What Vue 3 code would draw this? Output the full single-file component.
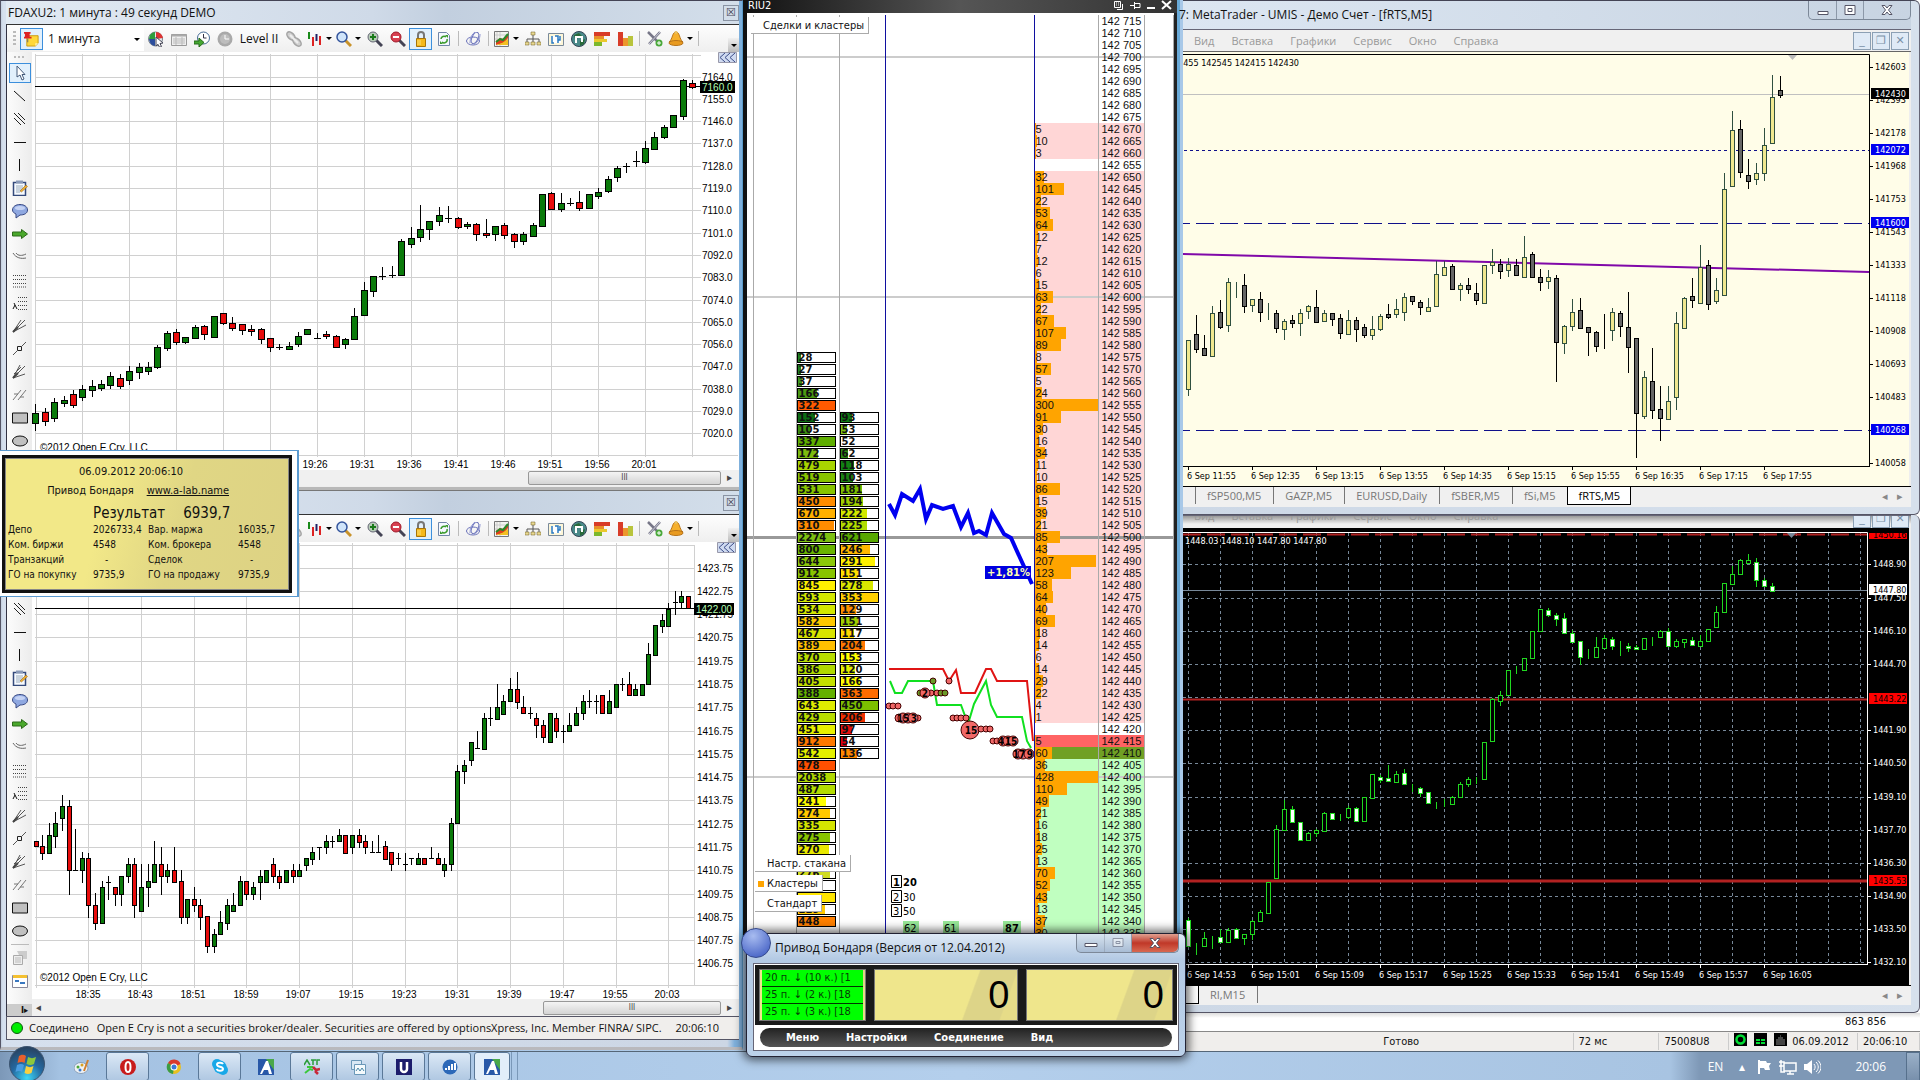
<script setup>
const icons = {
  note: '<path d="M3 5h12v8l-3 3H3z" fill="#ffd83a" stroke="#c99a10"/><path d="M15 13h-3v3z" fill="#fff3b0"/><path d="M0 1h7v2H6v3h2v2H0V6h1V3H0z" fill="#d22"/><path d="M4 8v4" stroke="#666"/>',
  globeCursor: '<circle cx="7.5" cy="8" r="7" fill="#e8eef0" stroke="#78828c"/><path d="M8 1a7 7 0 0 1 7 6L8 8z" fill="#d33"/><path d="M1 8a7 7 0 0 1 6-7v7z" fill="#2e9e3c"/><path d="M1 8h6v7a7 7 0 0 1-6-7z" fill="#2b4d9c"/><path d="M8 6l7 6-3 .5 1.5 3-2 .8-1.5-3L8 15z" fill="#fff" stroke="#445"/>',
  sheet: '<path d="M.5 3.5h15v11H.5z" fill="#eee" stroke="#999"/><path d="M.5 3.5h15v2H.5z" fill="#aaa"/><path d="M2 8h12M2 10h12M2 12h12M5 6v8M11 6v8" stroke="#bbb"/>',
  clockArrow: '<circle cx="9.5" cy="7" r="6" fill="#fff" stroke="#456a94"/><path d="M9.5 3v4h3" fill="none" stroke="#334"/><path d="M0 10h5V7l5 4.5L5 16v-3H0z" fill="#46a832" stroke="#246a1a"/>',
  clock: '<circle cx="8" cy="8" r="7.5" fill="#a9a9a9"/><circle cx="8" cy="8" r="5" fill="#bdbdbd"/><path d="M8 4v4h4" stroke="#fff" fill="none"/>',
  link: '<g fill="#d0d0d0" stroke="#a4a4a4" stroke-width="1.5"><ellipse cx="5" cy="5" rx="5" ry="3" transform="rotate(45 5 5)"/><ellipse cx="11" cy="11" rx="5" ry="3" transform="rotate(45 11 11)"/><path d="M4 4l8 8" stroke="#eee" stroke-width="2"/></g>',
  candles: '<path d="M2 1v7" stroke="#1a8a1a" stroke-width="2"/><path d="M6 6v9M13 5v9" stroke="#d22" stroke-width="2"/><path d="M9.5 3v7" stroke="#226" stroke-width="2"/>',
  search: '<path d="M9 9l6 6" stroke="#c8922a" stroke-width="3"/><circle cx="6" cy="6" r="5" fill="#cfe4fa" stroke="#33549c" stroke-width="1.5"/>',
  zoomIn: '<path d="M9 9l6 6" stroke="#445" stroke-width="3"/><circle cx="6" cy="6" r="5" fill="#b8ccb8" stroke="#667"/><path d="M6 3v6M3 6h6" stroke="#1a7a1a" stroke-width="2"/>',
  zoomOut: '<path d="M9 9l6 6" stroke="#445" stroke-width="3"/><circle cx="6" cy="6" r="5" fill="#d84050" stroke="#a01828"/><path d="M3 6h6" stroke="#fff" stroke-width="2"/>',
  lock: '<path d="M5 8V4a3 3 0 0 1 6 0v4" fill="none" stroke="#777" stroke-width="2"/><path d="M3.5 7.5h9v8h-9z" fill="#f4b81c" stroke="#a87408"/><path d="M5 9v5M7 9v5" stroke="#ffe27a"/>',
  refresh: '<path d="M2.5 1.5h8l3 3v10h-11z" fill="#f4f8ff" stroke="#7286a8"/><path d="M5 8a3 3 0 0 1 5-2M11 8a3 3 0 0 1-5 3" fill="none" stroke="#3a9a2a" stroke-width="1.5"/><path d="M9 4h3v3zM7 13H4v-3z" fill="#3a9a2a"/>',
  swirl: '<g fill="none" stroke="#6870b8"><ellipse cx="7" cy="10" rx="6.5" ry="4"/><ellipse cx="9" cy="7" rx="3" ry="6" transform="rotate(25 9 7)"/><path d="M4 12c0-5 2-9 5-11M8 13c4-2 6-5 6-10" stroke="#8890d0"/></g>',
  chart: '<path d="M.5.5h14v15H.5z" fill="#f4f4f0" stroke="#777"/><path d="M3 1v14M6 1v14M1 4h13M1 8h13" stroke="#ccc"/><path d="M2 14v-4l4-3 3 1 5-5v4l-4 5z" fill="#e0401c"/><path d="M2 11l4-3 3 1 5-6" stroke="#2a8a2a" stroke-width="2" fill="none"/><path d="M2 14l6-2 6-4v6z" fill="#f4c020"/>',
  tree: '<path d="M8 3v5M2 12V8h12v4M8 8v4" stroke="#555" fill="none"/><path d="M6 1h4v3H6zM0 11h4v3H0zM6 11h4v3H6zM12 11h4v3h-4z" fill="#e8d890" stroke="#6a5a20" stroke-width=".5"/>',
  pane: '<path d="M.5 2.5h15v12H.5z" fill="#fdf6d8" stroke="#7a8a9a"/><path d="M3 5h10v7H3z" fill="#fff"/><path d="M4 5v7h2M7 5h3v7M12 5v4h-2" stroke="#2a7ac0" fill="none" stroke-width="1.5"/>',
  globe: '<circle cx="8" cy="8" r="7.5" fill="#4a8a8a" stroke="#345"/><path d="M3 4l5-2 3 3-4 2-3 1zM9 10l5-2-1 5-4 2z" fill="#2a6a3a"/><path d="M5 12V6h6v5" fill="none" stroke="#fff" stroke-width="2"/>',
  barsH: '<path d="M0 1h16v4H0z" fill="#d83c28"/><path d="M0 5h10v3H0z" fill="#e8902a"/><path d="M0 8h13v3H0z" fill="#eac82c"/><path d="M0 11h8v4H0z" fill="#7cb82c"/>',
  barsV: '<path d="M1 1h5v14H1z" fill="#d83c28"/><path d="M6 7h5v8H6z" fill="#ec962c"/><path d="M11 5h5v10h-5z" fill="#b8c43c"/>',
  tools: '<path d="M1 1l12 12M13 1L2 13" stroke="#778" stroke-width="2.5"/><path d="M13 1L2 13" stroke="#ccd"/><circle cx="12" cy="12" r="3.5" fill="#4aa83a"/><path d="M12 10v4M10 12h4" stroke="#fff"/>',
  bell: '<path d="M8 1c4 0 3 7 7 10H1C5 8 4 1 8 1z" fill="#f6b02c" stroke="#b8741a"/><ellipse cx="8" cy="12" rx="7" ry="2.5" fill="#e89a20" stroke="#b8741a"/><circle cx="8" cy="1.5" r="1.5" fill="#e8c060"/>',
  pointer: '<path d="M5 1v11l3-2 2 5 2-1-2-4.5h3z" fill="#fff" stroke="#445a7a"/>',
  line: '<path d="M2 3l11 10" stroke="#111"/>',
  lines3: '<path d="M2 2l11 11M2 7l7 7M6 2l7 7" stroke="#222"/>',
  horiz: '<path d="M2 8.5h12" stroke="#111"/>',
  vert: '<path d="M7.5 2v12" stroke="#111"/>',
  pad: '<path d="M1.5 2.5h12v13h-12z" fill="#f6faff" stroke="#344a7c" stroke-width="1.5"/><path d="M4 .5h7v3H4z" fill="#8a9ab8"/><path d="M4 6h7M4 8h7M4 10h6M4 12h4" stroke="#9ab"/><path d="M8 11l6-6 1.5 1.5-6 5.5z" fill="#f0b030" stroke="#8a5a10" stroke-width=".5"/>',
  balloon: '<path d="M8 1.5c4 0 7.5 2 7.5 5.5S12 12 8 12l-4 3v-4C2 10 .5 9 .5 7 .5 3.5 4 1.5 8 1.5z" fill="#8fa8e0" stroke="#3a4a84"/><ellipse cx="8" cy="5" rx="5" ry="2" fill="#c4d2f4"/>',
  arrow: '<path d="M.5 6h9V3.5L15.5 8l-6 4.5V10h-9z" fill="#4aa82c" stroke="#2c6a1a"/>',
  arcs: '<path d="M1 4c3 5 8 6 13 5M4 4c2 3 6 3 10 1" stroke="#666" fill="none"/>',
  dots: '<path d="M1 3.5h14M1 7.5h14M1 11.5h14M1 15h14" stroke="#444" stroke-dasharray="1 1"/>',
  dotsA: '<path d="M6 2.5h9M6 6.5h9M6 10.5h9M6 14.5h9" stroke="#444" stroke-dasharray="1 1"/><path d="M1 14l2-4M2 8l3 6" stroke="#111" fill="none"/>',
  fan: '<path d="M1 14L13 2M1 14L9 2M1 14l13-7" stroke="#555"/><path d="M1 14l5-5" stroke="#444" stroke-width="2"/>',
  node: '<path d="M1 14l4-4M10 5l4-4" stroke="#555"/><path d="M5.5 5.5h4v4h-4z" fill="none" stroke="#222"/>',
  fan2: '<path d="M1 14L13 2M1 14L8 1M1 14l12-4M2 10L9 3" stroke="#555"/><path d="M1 14l5-5" stroke="#444" stroke-width="2"/>',
  hatch: '<path d="M1 13L9 3M6 13l8-10M2 7h4M8 10h4" stroke="#777"/>',
  rect: '<path d="M.5 3h15v10H.5z" fill="#c0c0c0" stroke="#111"/>',
  oval: '<ellipse cx="8" cy="8" rx="7.5" ry="5" fill="#c0c0c0" stroke="#111"/>',
  props: '<path d="M5 1h10v8H9z" fill="#ccc"/><path d="M1.5 5.5h9v9h-9z" fill="#eee" stroke="#aaa"/><path d="M3 8h6M3 10h6M3 12h6" stroke="#bbb"/>',
  sheet2: '<path d="M.5 2.5h15v12H.5z" fill="#fff" stroke="#889"/><path d="M1 2h14v3H1z" fill="#f4c030"/><path d="M3 7h4v2H3zM8 9h5v2H8zM4 12h4" fill="#3a78c0"/>',
}
const bar = [
  ['globeCursor', 'Инструмент'], ['sheet', 'Таблица'], ['clockArrow', 'Сессия'], ['clock', 'Время'], ['Level II'], ['link', 'Связать'],
  ['candles', 'Тип графика', 1], ['search', 'Масштаб', 1], ['zoomIn', 'Увеличить'], ['zoomOut', 'Уменьшить'], ['lock', 'Закрепить'], ['refresh', 'Обновить'], ['|'],
  ['swirl', 'Цвета'], ['|'], ['chart', 'Индикаторы', 1], ['tree', 'Структура'], ['pane', 'Панель'], ['globe', 'Рынок'], ['barsH', 'Объём по цене'], ['barsV', 'Объём'], ['|'],
  ['tools', 'Настройка'], ['bell', 'Сигналы', 1], ['|'],
]
const toolsTop = ['pointer', 'line', 'lines3', 'horiz', 'vert', 'pad', 'balloon', 'arrow', 'arcs', 'dots', 'dotsA', 'fan', 'node', 'fan2', 'hatch', 'rect', 'oval']

const parse = (s, x0, step) => s.trim().split(/\s+/).map((t, i) => {
  const [hi, top, bot, lo] = t.slice(1).split(',').map(Number)
  return { kind: t[0], x: Math.round(x0 + step * i), hi, top, bot, lo }
})
const dax = parse(`g404,413,423,430 r408,412,421,425 g398,402,418,421 g396,400,403,406 r390,394,405,407 g385,389,397,400 g380,386,390,396 g380,384,388,390 g372,376,385,388 r374,378,386,388 g366,371,380,384 g363,367,372,378 g362,367,371,374
g345,347,367,368 g331,333,348,350 r329,332,342,344 g337,337,342,343 g325,327,338,338 r325,326,334,339 g316,316,337,337 r313,313,323,324 r317,323,328,330 r324,324,330,334 r325,329,331,335 r328,329,339,343 r338,338,347,351 d344,347,347,349 g342,346,349,349 g332,336,344,346 g329,329,334,334 d333,338,338,338 r331,334,336,338 r335,336,347,347 g338,339,344,348 g308,316,339,339 g282,290,315,315 g276,276,291,296 d267,276,276,279 d266,275,275,277 g239,241,275,275 g227,238,244,247 g205,229,237,241 g221,221,229,239 g207,215,221,225 d206,218,218,222 r217,218,227,228 g222,224,226,228 r223,224,234,240 r219,233,235,237 g226,226,234,240 r223,225,235,238 r233,234,241,247 g232,234,241,244 g223,225,236,236 g194,194,226,226 r192,193,209,209 g193,203,209,211 d198,203,203,205 r191,202,208,210 g194,194,208,208 g188,192,196,198 g176,179,191,192 g166,168,177,181 d163,166,166,172 d151,161,161,166 g141,148,162,163 g132,137,149,149 g125,127,137,138 g115,115,127,127 g79,80,116,119 r80,83,87,88`, 35.4, 9.38)
const sp = parse(`r841,841,846,846 r835,846,853,859 g823,835,853,853 g812,823,836,847 g795,806,818,830 r800,806,870,894 d829,870,870,870 g852,858,870,882 r853,858,905,917 r893,905,923,929 g881,887,923,923 d876,882,882,899 r887,887,894,905 g876,876,894,905 g858,864,876,882 r858,864,905,917 g864,887,911,911 g864,881,887,906 g841,864,882,882 r847,864,876,894 g864,870,876,882 r847,870,882,882 r870,881,917,923 g899,899,917,923 r887,899,905,911 r899,905,917,929 r916,916,946,952 g929,934,946,952 g911,922,934,934 g899,905,923,929 g893,905,911,911 g876,881,905,905 r881,881,894,899 g882,887,894,899 g870,876,882,899 g870,870,882,882 r858,864,876,882 r870,876,882,888 g870,870,882,882 r864,870,876,882 g864,870,876,876 g858,858,865,870 g847,852,859,864 d847,847,847,859 g835,841,847,853 d836,841,841,847 g829,835,841,841 r835,835,853,853 g835,835,847,853 r829,835,842,847 r835,841,847,853 d841,852,852,852 d835,852,852,852 r841,846,859,859 r852,852,864,870 d853,858,858,864 d853,864,864,870 d858,858,858,864 g853,858,864,864 r858,858,864,864 d847,858,858,858 r853,858,864,864 g858,864,870,876 g818,823,864,870 g765,771,823,823 g760,765,771,783 g742,742,760,765 d731,748,748,748 g713,718,749,749 d707,718,718,725 g684,707,719,719 g695,701,714,714 g678,689,701,701 r672,689,702,708 r696,707,713,713 d707,713,713,718 r713,718,725,737 r720,725,737,742 g713,713,742,742 r713,718,731,737 d725,731,731,742 g713,725,731,731 g707,713,725,725 g695,701,713,719 d690,701,701,707 d695,701,701,713 r695,695,713,713 g690,701,713,713 g684,684,707,707 d678,684,684,690 r672,684,695,695 g684,689,695,695 g684,684,695,695 g643,654,684,684 g625,625,655,655 g614,620,626,632 g603,609,626,626 d591,602,602,614 g591,596,602,608 r596,596,608,608`, 35.6, 6.59)
const rts = parse(`u340,340,389,395 d315,334,349,352 d335,348,355,355 u306,313,356,356 d300,312,327,328 u278,282,325,331 u282,285,285,297 d274,285,306,312 u299,299,305,311 d292,299,312,321 u303,313,313,319 d310,313,328,332 u319,321,329,339 d315,320,323,327 u309,313,323,335 u305,306,311,318 d290,307,322,322 u310,313,321,321 d313,313,319,325 d314,318,333,338 u310,320,334,334 d317,320,329,341 d324,327,335,337 u316,329,335,339 u314,316,329,330 d304,314,317,318 u299,309,314,317 u293,297,312,320 d296,296,301,304 d300,302,307,314 u298,307,311,311 u261,274,306,306 u261,267,275,275 d264,266,289,289 u283,285,289,300 d278,285,289,293 d283,293,300,304 u265,265,303,303 u249,262,265,273 d259,264,271,278 u258,264,270,276 d259,265,275,275 u236,257,277,277 d252,254,277,277 d269,277,282,290 u270,277,281,288 d275,278,342,381 u325,326,343,353 u299,312,326,330 d298,310,328,328 d327,327,332,355 d331,332,346,351 d314,328,328,348 u308,312,330,340 d311,313,326,336 d292,327,347,372 d338,338,413,457 u371,377,416,418 d348,381,410,418 d386,409,418,440 u386,401,419,419 u312,323,397,409 u297,298,328,328 d278,296,300,307 u245,267,303,303 d260,265,304,309 u278,290,301,303 u173,189,295,295 u111,130,186,186 d120,129,172,177 d159,175,181,188 u163,173,179,184 u128,145,173,180 u75,97,143,143 d76,90,95,97`, 1188, 8)
const es = parse(`f917,919,945,945 h942,944,944,953 h931,937,945,945 h935,938,938,947 f928,936,941,941 h927,929,941,941 f927,928,937,937 h933,933,937,943 h919,920,933,938 h909,911,920,920 h881,881,912,912 h824,828,877,877 h799,808,829,829 f805,808,821,821 f821,821,839,839 h831,832,839,839 h828,829,832,835 h811,812,830,830 f812,812,818,818 h813,816,816,819 h805,807,816,817 f806,807,820,820 h796,796,820,820 h773,773,797,797 f774,776,779,781 f764,777,780,780 h770,773,781,781 f768,772,783,783 h783,786,786,790 f786,787,792,795 f791,791,802,802 h801,804,804,807 h798,805,805,805 h795,796,803,803 h781,783,796,796 h776,778,783,785 h776,778,778,782 h741,741,778,778 h697,698,740,740 h690,694,700,704 h669,669,694,694 h665,669,669,672 h657,657,669,669 h630,630,657,657 h608,608,630,630 f607,609,614,615 f612,614,618,624 f612,617,632,632 f629,632,641,641 f640,640,656,663 h648,655,655,657 h636,646,656,656 h634,637,647,647 f636,638,645,648 h640,645,645,654 f642,645,647,650 f644,646,648,648 h637,637,648,648 h636,637,637,644 h629,630,636,636 f627,630,645,645 h638,640,645,646 h638,638,641,646 f636,639,644,644 h634,640,645,645 h628,628,640,640 h605,611,626,626 h582,582,611,611 h565,573,583,583 h558,559,573,573 h553,559,562,562 f557,561,579,585 f577,579,585,585 f582,585,590,590`, 1188, 8)

const seq = (n, f) => Array.from({ length: n }, (_, i) => f(i))
const px = (v) => Math.round(v)
const daxRows = seq(17, (i) => ({ y: px(76.5 + 22.3 * i), t: (7164 - 9 * i).toFixed(1) })).slice(0, 17)
const daxCols = seq(15, (i) => px(35.4 + 46.9 * i))
const daxTimes = ['19:26', '19:31', '19:36', '19:41', '19:46', '19:51', '19:56', '20:01']
const spRows = seq(18, (i) => ({ y: px(567.6 + 23.28 * i), t: (1423.75 - i).toFixed(2) }))
const spCols = seq(13, (i) => px(35.6 + 52.72 * i))
const spTimes = ['18:35', '18:43', '18:51', '18:59', '19:07', '19:15', '19:23', '19:31', '19:39', '19:47', '19:55', '20:03']
const rtsRows = ['142603', '142393', '142178', '141968', '141753', '141543', '141333', '141118', '140908', '140693', '140483', '', '140058']
const rtsTimes = ['11:55', '12:35', '13:15', '13:55', '14:35', '15:15', '15:55', '16:35', '17:15', '17:55']
const esRows = seq(13, (i) => ({ y: px(563.4 + 33.17 * i), t: (1448.9 - 1.4 * i).toFixed(2) }))
const esTimes = ['14:53', '15:01', '15:09', '15:17', '15:25', '15:33', '15:41', '15:49', '15:57', '16:05']

const vols = [5, 10, 3, 0, 32, 101, 22, 53, 64, 12, 7, 12, 6, 15, 63, 22, 67, 107, 89, 8, 57, 5, 24, 300, 91, 30, 16, 34, 11, 10, 86, 15, 39, 21, 85, 43, 207, 123, 58, 64, 40, 69, 18, 14, 6, 14, 29, 22, 4, 1, 0, 5, 60, 36, 428, 110, 49, 21, 16, 18, 25, 13, 70, 52, 43, 13, 37, 30]
const c1 = '28#1f7f1f 27#1f7f1f 37#3f981f 166#4a9a14 322#ff5a00 152#0c6c14 105#3c9010 337#5fae00 172#7cbc10 479#a8d400 519#88c400 531#88c400 450#ff8c00 670#ffb000 310#ff8c00 2274#7cc010 800#6ab400 644#8cc80a 912#88c400 845#fff000 593#d4e800 534#d4e800 582#ffc800 467#d8e400 389#ffc000 370#b8dc00 386#b0d800 405#c4e000 388#64b000 643#e0ec00 429#b8dc00 451#e8f000 912#ff7800 542#e4f000 478#ff5000 2038#b0d800 487#b4dc00 241#ffff00 274#ffc800 335#d4e400 275#88c400 270#e8e800 - 276#d0dc20 #ffffff #ffe600 229#ffc800 448#ff8000'.split(' ')
const c2 = '93#0e7a14 53#7cc010 52#ffffff 62#2d8a10 118#128012 103#1a8212 181#7cc000 194#a0d000 222#d0e800 225#b0dc00 621#58a800 246#ffb800 291#fff000 151#ffe000 278#d8e800 353#ffd000 129#ff9000 151#a0d000 117#ffd800 204#ff7800 153#ffff00 120#e0f000 166#ffff00 363#ff6c00 450#7cc000 206#f03000 97#e81010 54#e00010 136#ff8800'.split(' ')
const cell = (list, i) => {
  if (i < 0 || i >= list.length || list[i] === '-') return null
  const [v, c] = list[i].split('#')
  return { v, c: '#' + c, w: v ? Math.min(100, v * 0.32) : 100 }
}
const ladder = seq(77, (i) => {
  const p = 142715 - 5 * i
  const v = i >= 9 ? vols[i - 9] : 0
  const side = p === 142415 ? 'ask-best' : p === 142410 ? 'bid-best' : !v ? '' : p > 142410 ? 'ask' : 'bid'
  return { p: '142 ' + (p - 142000), v, side, mark: p === 142500 ? 'mark-strong' : p % 100 === 0 ? 'mark' : '', a: cell(c1, i - 28), b: cell(c2, i - 33), bar: Math.min(100, v * 0.47) }
})
const dots = [
  [889, 706, 3, 0], [893, 706, 3, 0], [898, 706, 3, 0], [933, 681, 3, 1], [949, 681, 3, 0], [920, 693, 3, 1], [931, 693, 3, 0], [925, 693, 5, 0], [937, 693, 3, 0], [941, 693, 3, 1], [945, 693, 3, 1],
  [899, 718, 4, 0], [918, 718, 3, 0], [903, 718, 5, 0], [908, 718, 5, 0], [913, 718, 5, 0], [953, 718, 3, 0], [957, 718, 3, 0], [961, 718, 3, 0], [966, 718, 3, 0],
  [970, 730, 9, 0], [981, 729, 3, 0], [986, 729, 3, 0], [990, 729, 3, 0], [993, 741, 3, 0], [997, 741, 3, 0], [1003, 741, 5, 0], [1008, 741, 5, 0], [1013, 741, 5, 0], [1018, 754, 5, 0], [1023, 754, 5, 0], [1029, 754, 5, 0],
]
const dotText = [[903, 722, '15'], [914, 722, '3'], [925, 697, '2'], [971, 734, '15'], [1001, 745, '4'], [1011, 745, '15'], [1019, 758, '17'], [1030, 758, '9']]
const menu = ['Вид', 'Вставка', 'Графики', 'Сервис', 'Окно', 'Справка']
const tabs = ['fSP500,M5', 'GAZP,M5', 'EURUSD,Daily', 'fSBER,M5', 'fSi,M5']
const stats = [['Депо', '2026733,4', 'Вар. маржа', '16035,7'], ['Ком. биржи', '4548', 'Ком. брокера', '4548'], ['Транзакций', '-', 'Сделок', '-'], ['ГО на покупку', '9735,9', 'ГО на продажу', '9735,9']]
const apps = [
  { n: 'Paint', s: '<ellipse cx="7" cy="9" rx="7" ry="5.5" fill="#eef2f6" stroke="#8aa0b8"/><circle cx="4" cy="8" r="1.5" fill="#4aa83a"/><circle cx="8" cy="6" r="1.5" fill="#d8a020"/><circle cx="6" cy="11" r="1.5" fill="#3a78c8"/><path d="M10 12L14 1" stroke="#d08030" stroke-width="2"/>' },
  { n: 'Opera', on: 1, s: '<circle cx="8" cy="8" r="8" fill="#c81c1c"/><ellipse cx="8" cy="8" rx="2.5" ry="5" fill="none" stroke="#fff" stroke-width="2"/>' },
  { n: 'Chrome', s: '<circle cx="8" cy="8" r="7" fill="#e8c020"/><path d="M8 8L2 4a7 7 0 0 1 12.5 1z" fill="#d8382c"/><path d="M8 8L2 4a7 7 0 0 0 5 11z" fill="#3a9c44"/><circle cx="8" cy="8" r="3.5" fill="#fff"/><circle cx="8" cy="8" r="2.5" fill="#3a78d8"/>' },
  { n: 'Skype', on: 1, s: '<circle cx="5" cy="5" r="5" fill="#18a8e8"/><circle cx="11" cy="11" r="5" fill="#18a8e8"/><circle cx="8" cy="8" r="6.5" fill="#18a8e8"/><path d="M11 5c-1-2-6-1.5-6 .5 0 3 6 1.5 6 4.5 0 2-5 2.5-6.5 0" stroke="#fff" stroke-width="2" fill="none"/>' },
  { n: 'Терминал', s: '<path d="M0 0h16v16H0z" fill="#2858a8"/><path d="M8 0h8v11z" fill="#4aa84a"/><path d="M2 15L8 2h2l4 13h-3l-1-4H6l-2 4z" fill="#fff"/>' },
  { n: 'ATF', on: 1, s: '<path d="M0 6l3-5 3 5M7 1h5M9 1v5M13 6V1h4" stroke="#2c9c3c" stroke-width="1.5" fill="none"/><path d="M1 14l5-4 3 1M3 8h6" stroke="#3ac83a" stroke-width="2" fill="none"/><path d="M9 8l3 3 4-1M11 12l3 3" stroke="#c82838" stroke-width="2.5" fill="none"/>' },
  { n: 'Графики', on: 1, s: '<path d="M1.5 1.5h10v9h-10z" fill="#d8e8f4" stroke="#6a98b8"/><path d="M4.5 5.5h11v10h-11z" fill="#f4fafc" stroke="#6a98b8"/><path d="M6 12l2-3 2 3 2-3 2 3" stroke="#4a88a8" fill="none"/>' },
  { n: 'U', on: 1, s: '<path d="M0 0h16v16H0z" fill="#1c1c6c"/><path d="M5 3v7a3 3 0 0 0 6 0V3" stroke="#fff" stroke-width="2.5" fill="none"/>' },
  { n: 'QUIK', on: 1, s: '<circle cx="8" cy="8" r="7.5" fill="#2c68b8"/><path d="M4 11V9M7 11V7M10 11V5M13 11V4" stroke="#fff" stroke-width="2"/>' },
  { n: 'Привод', on: 2, s: '<path d="M0 0h16v16H0z" fill="#2858a8"/><path d="M8 0h8v11z" fill="#4aa84a"/><path d="M2 15L8 2h2l4 13h-3l-1-4H6l-2 4z" fill="#fff"/>' },
]
</script>

<template>
  <div class="screen">
    <main class="desk">
      <section class="oec">
        <template v-for="pane in 2" :key="pane">
          <header class="oec-title">
            <h1 v-if="pane === 1">FDAXU2: 1 минута : 49 секунд DEMO</h1>
            <button class="oec-close" aria-label="Закрыть">☒</button>
          </header>
          <div class="oec-pane">
            <div class="toolbar">
              <i class="grip"></i>
              <button class="tb lit" aria-label="Заметка"><svg viewBox="0 0 17 17" v-html="icons.note"></svg></button>
              <label class="period"><select aria-label="Период"><option>1 минута</option></select><i class="caret"></i></label>
              <template v-for="(b, i) in bar" :key="i">
                <i v-if="b[0] === '|'" class="sep"></i>
                <button v-else-if="!icons[b[0]]" class="tb level">{{ b[0] }}</button>
                <button v-else class="tb" :class="{ drop: b[2], lit: b[0] === 'lock' }" :aria-label="b[1]"><svg viewBox="0 0 16 16" v-html="icons[b[0]]"></svg><i v-if="b[2]" class="caret"></i></button>
              </template>
              <button class="more" aria-label="Ещё"><i class="caret"></i></button>
            </div>
            <div class="oec-body">
              <nav class="tools">
                <i class="grip-h"></i>
                <button v-for="t in toolsTop" :key="t" class="tool" :class="{ lit: t === 'pointer' }" :aria-label="t"><svg viewBox="0 0 16 16" v-html="icons[t]"></svg></button>
                <template v-if="pane === 2">
                  <i class="rule"></i>
                  <button class="tool" aria-label="Свойства"><svg viewBox="0 0 16 16" v-html="icons.props"></svg></button>
                  <button class="tool" aria-label="Список"><svg viewBox="0 0 16 16" v-html="icons.sheet2"></svg></button>
                  <button class="expand" aria-label="Развернуть">I▸</button>
                </template>
              </nav>
              <div class="plot">
                <svg v-if="pane === 1" class="chart" viewBox="32 52 707 418">
                  <path v-for="x in daxCols" :key="x" class="grid" :d="`M${x}.5 54V457`" />
                  <path class="grid" d="M35 55.5H701M35 455.5H738" />
                  <path v-for="r in daxRows" :key="r.y" class="grid" :d="`M35 ${r.y}.5H701`" />
                  <path d="M35 86.5H701" stroke="#000" />
                  <g v-for="c in dax" :key="c.x" :class="'k-' + c.kind">
                    <path :d="`M${c.x}.5 ${c.hi}V${c.lo + 1}`" />
                    <path v-if="c.kind === 'd'" :d="`M${c.x - 3} ${c.top}.5H${c.x + 4}`" />
                    <rect v-else :x="c.x - 2.5" :y="c.top + 0.5" width="6" :height="c.bot - c.top" />
                  </g>
                  <text v-for="r in daxRows" :key="r.t" class="ax" x="702" :y="r.y + 4">{{ r.t }}</text>
                  <path d="M700 81h35v12h-35z" />
                  <text class="ax now" x="702" y="91">7160.0</text>
                  <text class="ax" x="40" y="451">©2012 Open E Cry, LLC</text>
                  <text v-for="(t, i) in daxTimes" :key="t" class="ax mid" :x="315 + 47 * i" y="468">{{ t }}</text>
                  <g class="fold"><path d="M718.5 52.5h18v10h-18z" /><path d="M725 53l-5 4.5 5 4.5M730 53l-5 4.5 5 4.5M735 53l-5 4.5 5 4.5" /></g>
                </svg>
                <svg v-else class="chart" viewBox="32 542 707 457">
                  <path v-for="x in spCols" :key="x" class="grid" :d="`M${x}.5 543V988`" />
                  <path class="grid" d="M35 545.5H694M35 985.5H738M694.5 545V986" />
                  <path v-for="r in spRows" :key="r.y" class="grid" :d="`M35 ${r.y}.5H694`" />
                  <path d="M35 608.5H694" stroke="#000" />
                  <g v-for="c in sp" :key="c.x" :class="'k-' + c.kind">
                    <path :d="`M${c.x}.5 ${c.hi}V${c.lo + 1}`" />
                    <path v-if="c.kind === 'd'" :d="`M${c.x - 2} ${c.top}.5H${c.x + 3}`" />
                    <rect v-else :x="c.x - 1.5" :y="c.top + 0.5" width="4" :height="c.bot - c.top" />
                  </g>
                  <text v-for="r in spRows" :key="r.t" class="ax" x="697" :y="r.y + 4">{{ r.t }}</text>
                  <path d="M694 603h40v12h-40z" />
                  <text class="ax now" x="696" y="613">1422.00</text>
                  <text class="ax" x="40" y="981">©2012 Open E Cry, LLC</text>
                  <text v-for="(t, i) in spTimes" :key="t" class="ax mid" :x="px(87.5 + 52.72 * i)" y="998">{{ t }}</text>
                  <g class="fold"><path d="M717.5 542.5h18v10h-18z" /><path d="M724 543l-5 4.5 5 4.5M729 543l-5 4.5 5 4.5M734 543l-5 4.5 5 4.5" /></g>
                </svg>
                <div class="scroll" :class="'s' + pane"><span>◂</span><i class="thumb">III</i><span>▸</span></div>
              </div>
            </div>
          </div>
          <div v-if="pane === 1" class="split"></div>
        </template>
        <footer class="oec-status"><i class="led"></i><span>Соединено</span><span>Open E Cry is not a securities broker/dealer. Securities are offered by optionsXpress, Inc. Member FINRA/ SIPC.</span><time>20:06:10</time></footer>
      </section>

      <section class="dom">
        <header class="dom-title"><span>RIU2</span>
          <svg viewBox="0 0 60 12"><path d="M2.5 1.5h6v6h-6zM4 3h1M6 3h1M4 5h1M6 5h1M5 9.5h5.5V4" /><path d="M18 5.5h4M22.5 2v7M23 3.5h5v4h-5" /><path d="M35 8h8" stroke-width="2" /><path d="M50 1l9 8M59 1l-9 8" stroke-width="2" /></svg>
        </header>
        <div class="dom-body">
          <table class="ladder">
            <colgroup><col class="w6"><col class="w43"><col class="w43"><col class="w46"><col class="w149"><col class="w64"><col class="w46"><col></colgroup>
            <tbody>
              <tr v-for="r in ladder" :key="r.p" :class="[r.side, r.mark]">
                <td></td><td></td>
                <td><span v-if="r.a" class="box"><i :style="{ width: r.a.w + '%', background: r.a.c }"></i><b>{{ r.a.v }}</b></span></td>
                <td><span v-if="r.b" class="box"><i :style="{ width: r.b.w + '%', background: r.b.c }"></i><b>{{ r.b.v }}</b></span></td>
                <td></td>
                <td class="vol"><template v-if="r.v"><i :style="{ width: r.bar + '%' }"></i><b>{{ r.v }}</b></template></td>
                <td class="price">{{ r.p }}</td><td></td>
              </tr>
            </tbody>
          </table>
          <svg class="trades" viewBox="885 13 149 920">
            <path d="M889 504l6 11 7-21 11 7 7-12 6 30 6-14 11 4 10-3 8 21 7-14 6 20 5-2 7 4 6-22 12 21 7 4 21 46" stroke="#0000f0" stroke-width="4" fill="none" />
            <path d="M985 566h46v13h-46z" fill="#0000e0" /><text x="987" y="576" class="pct">+1,81%</text>
            <path d="M889 669h54l6 12 7-11 5 23h14l11-24h5l6 12h30l6 60" stroke="#e01414" stroke-width="2" fill="none" />
            <path d="M890 681l5 12h7l6-12h25l4 24h24l7 19 6-20 12-23 5 24 6 12h25l5 24 4 7" stroke="#10e020" stroke-width="2" fill="none" />
            <circle v-for="(d, i) in dots" :key="i" :cx="d[0]" :cy="d[1]" :r="d[2]" :fill="d[3] ? '#6a9a28' : '#f06868'" stroke="#400" />
            <text v-for="t in dotText" :key="t[0]" class="dt" :x="t[0]" :y="t[1]">{{ t[2] }}</text>
            <g class="pick"><path d="M891.5 875.5h10v12h-10zM891.5 890.5h10v12h-10zM891.5 904.5h10v12h-10z" /><text x="893" y="886" class="b">1</text><text x="903" y="886" class="b">20</text><text x="893" y="901">2</text><text x="903" y="901">30</text><text x="893" y="915">3</text><text x="903" y="915">50</text></g>
            <g class="sum"><path d="M903 921h16v12h-16zM943 921h16v12h-16zM1003 921h18v12h-18z" /><text x="904" y="932">62</text><text x="944" y="932">61</text><text x="1005" y="932" class="b">87</text></g>
          </svg>
          <button class="chip deals">Сделки и кластеры</button>
          <div class="chips"><button class="chip">Настр. стакана</button><button class="chip mark-on">Кластеры</button><button class="chip">Стандарт</button></div>
        </div>
      </section>

      <section class="mt">
        <article class="mt-win">
          <header class="mt-title"><h2>7: MetaTrader - UMIS - Демо Счет - [fRTS,M5]</h2>
            <div class="win-btns"><button aria-label="Свернуть"><svg viewBox="0 0 14 14"><path d="M2 8.5h10v3H2z" /></svg></button><button aria-label="Развернуть"><svg viewBox="0 0 14 14"><path d="M2 2.5h10v9H2zM5 5.5h4v3H5z" /></svg></button><button class="wide" aria-label="Закрыть"><svg viewBox="0 0 14 14"><path d="M2 2.5h3l2 2.5 2-2.5h3L8.5 7l3.5 4.5H9L7 9l-2 2.5H2L5.5 7z" /></svg></button></div>
          </header>
          <nav class="mt-menu"><a v-for="m in menu" :key="m" href="#">{{ m }}</a><span class="mdi"><button aria-label="Свернуть">_</button><button aria-label="Восстановить">❐</button><button aria-label="Закрыть">✕</button></span></nav>
          <svg class="chart" viewBox="1183 51 728 435">
            <path d="M1183 51h728v435h-728z" fill="#fffde8" /><path d="M1183 51.5h728" stroke="#666" /><path d="M1909 52h2v434h-2z" fill="#eee" />
            <path d="M1183 54.5h686.5V466M1183 466.5h687" class="frame" />
            <path d="M1788 55h9l-4.5 5z" fill="#bbb" />
            <path d="M1183 94.5h686" stroke="#c0c0c0" /><path d="M1184 150.5h685" stroke="#10108a" stroke-dasharray="3 3" />
            <path d="M1183 223.5h686M1183 430.5h686" stroke="#10108a" stroke-dasharray="18 6" stroke-dashoffset="11" />
            <path d="M1183 254L1869 272" stroke="#8008a8" stroke-width="2" />
            <g v-for="c in rts" :key="c.x" :class="'m-' + c.kind">
              <path :d="`M${c.x}.5 ${c.hi}V${c.lo + 1}`" /><rect :x="c.x - 1.5" :y="c.top + 0.5" width="4" :height="c.bot - c.top" />
            </g>
            <g v-for="(t, i) in rtsRows" :key="t"><path :d="`M1870 ${67 + 33 * i}.5h3`" stroke="#000" /><text class="mx" x="1875" :y="70 + 33 * i">{{ t }}</text></g>
            <path d="M1871 88h38v11h-38z" /><path d="M1871 144h38v11h-38zM1871 217h38v11h-38zM1871 424h38v11h-38z" fill="#0000f0" />
            <g class="mx w"><text x="1875" y="97">142430</text><text x="1875" y="153">142072</text><text x="1875" y="226">141600</text><text x="1875" y="433">140268</text></g>
            <g v-for="(t, i) in rtsTimes" :key="t"><path :d="`M${1188 + 64 * i}.5 466v4`" stroke="#000" /><text class="mx" :x="1187 + 64 * i" y="479">6 Sep {{ t }}</text></g>
            <text class="mx" x="1178" y="66">2455 142545 142415 142430</text>
          </svg>
          <nav class="tabs"><a v-for="t in tabs" :key="t" href="#">{{ t }}</a><a href="#" class="on">fRTS,M5</a><span class="arrows">◂ ▸</span></nav>
        </article>
        <article class="mt-win second">
          <nav class="mt-menu cut"><a v-for="m in menu" :key="m" href="#">{{ m }}</a><span class="mdi"><button aria-label="Свернуть">_</button><button aria-label="Восстановить">❐</button><button aria-label="Закрыть">✕</button></span></nav>
          <svg class="chart" viewBox="1183 527 728 457">
            <path d="M1183 527h728v457h-728z" /><path d="M1909 527h2v457h-2z" fill="#eee" />
            <path v-for="i in 22" :key="i" class="dg" :d="`M${1156 + 32 * i}.5 532V963`" />
            <path v-for="r in esRows" :key="r.y" class="dg" :d="`M1183 ${r.y}.5H1867`" />
            <path d="M1183 589.5h684" stroke="#778899" /><path d="M1183 533.5h684" stroke="#b22222" stroke-dasharray="18 6" stroke-width="2" />
            <path d="M1183 698.5h684" stroke="#b22222" stroke-width="2" /><path d="M1183 880h684" stroke="#b22222" stroke-width="3" />
            <path d="M1183 531.5h684.5V964M1183 963.5h685" stroke="#fff" fill="none" />
            <path d="M1787 532h9l-4.5 5z" fill="#789" />
            <g v-for="c in es" :key="c.x" :class="'e-' + c.kind">
              <path :d="`M${c.x}.5 ${c.hi}V${c.lo + 1}`" /><rect :x="c.x - 1.5" :y="c.top + 0.5" width="4" :height="c.bot - c.top" />
            </g>
            <g class="mx w">
              <g v-for="r in esRows" :key="r.t"><template v-if="r.t !== '1443.30'"><path :d="`M1868 ${r.y}.5h3`" stroke="#fff" /><text x="1873" :y="r.y + 3">{{ r.t }}</text></template></g>
              <text x="1185" y="543">1448.03 1448.10 1447.80 1447.80</text>
              <g v-for="(t, i) in esTimes" :key="t"><path :d="`M${1188 + 64 * i}.5 963v4`" stroke="#fff" /><text :x="1187 + 64 * i" y="977">6 Sep {{ t }}</text></g>
            </g>
            <path d="M1869 532h38v6h-38zM1869 692h38v11h-38zM1869 874h38v11h-38z" fill="#f00" /><path d="M1869 583h38v11h-38z" fill="#fff" />
            <g class="mx"><text x="1873" y="537">1450.16</text><text x="1873" y="701">1443.22</text><text x="1873" y="883">1435.53</text><text x="1873" y="592">1447.80</text></g>
            <path d="M1869 527h38v5h-38z" />
          </svg>
          <nav class="tabs low"><i></i><a href="#">RI,M15</a><span class="arrows">◂ ▸</span></nav>
        </article>
        <div class="strip">863 856</div>
        <footer class="quik">
          <span class="q1"></span><span class="q2">Готово</span><span class="q3">72 мс</span><span class="q4">75008U8</span>
          <span class="q5"><svg viewBox="0 0 53 13"><path d="M0 0h13v13H0zM20 0h13v13H20zM40 0h13v13H40z" /><circle cx="6.5" cy="6.5" r="4" fill="none" stroke="#0d3" stroke-width="2.5" /><path d="M22 6h9v5h-9z" fill="#0d3" /><path d="M26.5 6v5M22 8.5h9" stroke="#000" /><path d="M42 11h9M42 9h9M42 7h9M44 5h5M46 3h1" stroke="#888" /></svg><time>06.09.2012</time></span>
          <time class="q6">20:06:10</time>
        </footer>
      </section>
    </main>

    <aside class="info">
      <div class="info-in">
        <time class="when">06.09.2012 20:06:10</time>
        <p class="who"><span>Привод Бондаря</span><a href="#">www.a-lab.name</a></p>
        <p class="res"><span>Результат</span><b>6939,7</b></p>
        <table><tbody><tr v-for="s in stats" :key="s[0]"><th>{{ s[0] }}</th><td :class="{ dash: s[1] === '-' }">{{ s[1] }}</td><th>{{ s[2] }}</th><td :class="{ dash: s[3] === '-' }">{{ s[3] }}</td></tr></tbody></table>
      </div>
    </aside>

    <section class="drive">
      <i class="orb"></i>
      <header><h2>Привод Бондаря (Версия от 12.04.2012)</h2>
        <div class="win-btns aero"><button aria-label="Свернуть"><svg viewBox="0 0 14 14"><path d="M1 7.5h12v3H1z" /></svg></button><button class="dim" aria-label="Развернуть"><svg viewBox="0 0 14 14"><path d="M2 2.5h10v8H2zM5 5.5h4v2H5z" /></svg></button><button class="wide red" aria-label="Закрыть"><svg viewBox="0 0 14 14"><path d="M2 2.5h3l2 2.5 2-2.5h3L8.5 7l3.5 4.5H9L7 9l-2 2.5H2L5.5 7z" /></svg></button></div>
      </header>
      <div class="drive-in">
        <div class="lcds">
          <ul class="lcd list"><li>20 п. ↓ (10 к.) [1</li><li>25 п. ↓ (2 к.) [18</li><li>25 п. ↓ (3 к.) [18</li></ul>
          <output class="lcd">0</output><output class="lcd">0</output>
        </div>
        <nav class="pill"><button>Меню</button><button>Настройки</button><button>Соединение</button><button>Вид</button></nav>
      </div>
    </section>

    <footer class="taskbar">
      <button class="start" aria-label="Пуск"><svg viewBox="0 0 36 36"><defs><radialGradient id="orbfill" cx=".5" cy=".9" r=".9"><stop offset="0" stop-color="#3cd8f8" /><stop offset=".5" stop-color="#2468a0" /><stop offset="1" stop-color="#28405c" /></radialGradient></defs><circle cx="18" cy="18" r="17.5" fill="url(#orbfill)" stroke="#3c5470" /><path d="M10 10c3-2 5-1.5 7 0l-1.5 7c-2-1.5-4-1.5-7 0z" fill="#e8602c" /><path d="M19 11c3 1.5 5 1.5 8 0l-2 7c-3 1.5-5 1-7.5 0z" fill="#8cc83c" /><path d="M8 19c3-1.5 5-1.5 7 0l-2 7c-2-1.5-4-1.5-6.5 0z" fill="#4a9ce0" /><path d="M17 20c3 1.5 5 1.5 7.5 0l-2 7c-3 1.5-5 1-7 0z" fill="#f8d040" /></svg></button>
      <button v-for="a in apps" :key="a.n" class="app" :class="{ open: a.on, current: a.on === 2 }" :aria-label="a.n"><svg viewBox="0 0 16 16" v-html="a.s"></svg></button>
      <i class="stack"></i>
      <div class="tray"><span class="lang">EN</span><span class="up">▴</span>
        <svg viewBox="0 0 64 16"><path d="M2 1v14" stroke="#fff" stroke-width="2" /><path d="M3 2h6l1 2h4l-2 3 1 4H8L7 9H3z" fill="#fff" /><path d="M27 4h12v8H27zM30 15h7M33 12v3M24 1v6M22 3h5v4h-5M24 7v6h4" stroke="#fff" fill="none" stroke-width="1.5" /><path d="M47 5h3l5-4v14l-5-4h-3z" fill="#fff" /><path d="M57 5c1.5 2 1.5 4 0 6M59 3c3 3 3 7 0 10M61 1.5c4 4 4 9 0 13" stroke="#fff" fill="none" /></svg>
        <time>20:06</time><button class="peek" aria-label="Показать рабочий стол"></button></div>
    </footer>
  </div>
</template>

<style>
html, body { margin: 0; background: #b0cbe8; }
</style>
<style scoped>
.screen { --ui: "Open Sans", "Noto Sans", sans-serif; --tah: "DejaVu Sans Condensed", "DejaVu Sans", sans-serif; position: relative; min-height: 100vh; overflow: hidden; font: 11px/14px var(--ui); color: #111; background: linear-gradient(90deg, #a8c6e6, #bcd4ee); }
* { box-sizing: border-box; }
button { font: inherit; color: inherit; border: 0; padding: 0; background: none; }
h1, h2, p, ul { margin: 0; padding: 0; font-weight: 400; }
i { font-style: normal; display: block; }
a { color: inherit; text-decoration: none; }
svg { display: block; }
.desk { display: grid; grid-template-columns: minmax(0, 743fr) minmax(0, 437fr) minmax(0, 740fr); align-items: start; }
.chart { width: 100%; height: auto; }
.chart text, .trades text { white-space: pre; }

.oec { background: linear-gradient(90deg, #c4d0e0, #d6e0ee 2px, #ccd6e4 98%, #7fb0dc 99%); border-top: 1px solid #445; border-left: 1px solid #556; border-right: 1px solid #5a9ac8; border-bottom: 3px solid #b9b9bd; padding: 0 3px 7px 5px; }
.oec-title { height: 23px; display: flex; align-items: center; justify-content: space-between; padding-left: 2px; background: linear-gradient(90deg, #e2eaf3, #cfdae8 50%, #c2cfdf 60%, #d3deea); }
.oec-title h1 { font: 12px/20px var(--ui); }
.oec-close { margin-left: auto; width: 16px; height: 16px; border: 1px solid #8a94a4; font: 11px/12px "DejaVu Sans", sans-serif; color: #445; }
.oec-pane { border-top: 1px solid #333; border-left: 1px solid #334; background: #fff; }
.toolbar { height: 27px; display: flex; align-items: center; position: relative; background: linear-gradient(#fdfdfd, #efefef); }
.grip { width: 3px; height: 15px; margin: 0 4px 0 6px; background: repeating-linear-gradient(#bbb 0 2px, transparent 2px 4px); }
.tb { position: relative; width: 23px; height: 22px; flex: none; display: flex; align-items: center; justify-content: center; }
.tb svg { width: 16px; height: 16px; flex: none; }
.tb.lit, .tool.lit { border: 1px solid #3c8fdc; background: #e2f0fc; }
.drop { width: 29px; gap: 3px; }
.level { width: 46px; font: 12px/16px var(--ui); }
.caret { width: 0; height: 0; border: 3px solid transparent; border-top-color: #000; border-bottom: 0; }
.period { position: relative; width: 101px; height: 24px; flex: none; background: #fff; }
.period select { width: 100%; height: 100%; appearance: none; border: 0; background: #fff; padding: 0 5px; font: 12px/16px var(--ui); color: #111; }
.period .caret { position: absolute; right: 4px; top: 11px; }
.sep { width: 1px; height: 15px; margin: 0 3px; background: #bbb; flex: none; }
.more { margin-left: auto; align-self: flex-end; width: 11px; height: 14px; background: linear-gradient(#f0f0f0, #bbb); display: flex; align-items: center; justify-content: center; }
.oec-body { display: flex; }
.tools { width: 25px; flex: none; display: flex; flex-direction: column; align-items: center; gap: 3px; overflow: hidden; background: linear-gradient(90deg, #fcfcfc, #ececec); }
.tools > * { flex: none; }
.grip-h { width: 11px; height: 2px; margin: 4px 0 2px; background: repeating-linear-gradient(90deg, #bbb 0 2px, transparent 2px 4px); }
.tool { width: 22px; height: 20px; display: flex; align-items: center; justify-content: center; }
.tool svg { width: 16px; height: 16px; }
.rule { width: 18px; height: 1px; background: #bbb; }
.expand { margin-top: auto; align-self: stretch; height: 12px; font: bold 9px/12px var(--tah); text-align: right; padding-right: 4px; background: #ccc; }
.plot { flex: 1; min-width: 0; }
.grid { stroke: #d0d0d0; }
.k-g path, .k-r path, .k-d path { stroke: #000; }
.k-g rect { fill: #0a7a0a; stroke: #000; }
.k-r rect { fill: #e80c0c; stroke: #000; }
.ax { font: 10px "Liberation Sans", sans-serif; fill: #000; }
.ax.now { fill: #b4ffb4; }
.mid { text-anchor: middle; }
.fold path:first-child { fill: #cfdaf0; stroke: #99a; }
.fold path { fill: none; stroke: #3c4c88; stroke-width: 1; }
.scroll { display: flex; align-items: center; justify-content: space-between; padding: 0 7px 0 4px; background: #f0f0f0; color: #444; font: 11px/14px var(--tah); }
.s1 { height: 16px; }
.s2 { height: 17px; }
.thumb { width: 193px; height: 14px; margin: 0 6px 0 auto; border: 1px solid #989898; border-radius: 2px; background: linear-gradient(#f4f4f4, #d4d4d4); font: 8px/11px var(--tah); text-align: center; }
.s2 .thumb { width: 178px; }
.split { height: 5px; border-top: 1px solid #eee; border-bottom: 1px solid #777; background: #b8b8b8; }
.oec-status { height: 24px; display: flex; align-items: center; gap: 8px; padding: 0 20px 0 4px; background: #f0eeec; border: 1px solid #556; border-right: 0; font: 11px/16px var(--ui); white-space: nowrap; }
.oec-status time { margin-left: auto; }
.led { width: 12px; height: 12px; margin-right: -2px; border-radius: 50%; background: #0e0; border: 1px solid #151; flex: none; }

.dom { background: #fff; border-left: 4px solid #111; border-right: 3px solid #6aaad8; height: 937px; overflow: hidden; }
.dom-title { height: 13px; margin-left: -4px; display: flex; justify-content: space-between; padding: 0 5px; background: linear-gradient(90deg, #111, #555 50%, #333); color: #fff; font: 11px/11px var(--tah); }
.dom-title svg { width: 60px; height: 12px; fill: none; stroke: #fff; }
.dom-body { position: relative; border-right: 3px solid #222; padding-top: 2px; }
.ladder { width: 100%; table-layout: fixed; border-collapse: collapse; }
.w6 { width: 6px; } .w43 { width: 43px; } .w46 { width: 46px; } .w149 { width: 149px; } .w64 { width: 64px; }
.ladder td { height: 12px; padding: 0; border-right: 1px solid #aaa; font: 11px/12px "Liberation Sans", sans-serif; white-space: nowrap; }
.ladder td:nth-child(4), .ladder td:nth-child(5) { border-right-color: #1010a0; }
.ladder .mark td { background-image: linear-gradient(transparent 5px, #ccc 5px, #ccc 7px, transparent 7px); }
.ladder .mark-strong td { background-image: linear-gradient(transparent 5px, #999 5px, #999 8px, transparent 8px); }
.ask td:nth-child(6), .ask td:nth-child(7) { background-color: #ffd6d6; }
.bid td:nth-child(6), .bid td:nth-child(7) { background-color: #c0ffc0; }
.ask-best td:nth-child(6), .ask-best td:nth-child(7) { background-color: #ff6464; }
.bid-best td:nth-child(6), .bid-best td:nth-child(7) { background-color: #70a024; }
.vol { position: relative; }
.vol i { position: absolute; left: 0; top: 0; height: 12px; background: #ffa400; }
.vol b { position: relative; font-weight: 400; padding-left: 1px; }
.ladder .price { padding-left: 3px; }
.box { position: relative; display: block; width: 39px; height: 11px; border: 1px solid #000; background: #fff; overflow: hidden; }
.box i { position: absolute; inset: 0 auto 0 0; }
.box b { position: relative; display: block; font: bold 10px/9px "DejaVu Sans", sans-serif; padding-left: 1px; }
.trades { position: absolute; left: 138px; top: 0; width: 149px; height: 920px; }
.pct { font: bold 10px "DejaVu Sans", sans-serif; fill: #ffffb0; }
.dt { font: bold 10px var(--tah); text-anchor: middle; }
.pick path { fill: #fff; stroke: #000; }
.pick text, .sum text { font: 11px var(--tah); }
.sum path { fill: #98e898; }
.pick .b, .sum .b { font-weight: 700; }
.chip { display: block; height: 17px; padding: 0 4px 0 12px; background: #fff; border: solid #aaa; border-width: 0 1px 1px 0; font: 11px/15px var(--tah); white-space: nowrap; }
.deals { position: absolute; left: 4px; top: 4px; }
.chips { position: absolute; left: 8px; top: 842px; display: flex; flex-direction: column; align-items: flex-start; gap: 3px; }
.mark-on { position: relative; }
.mark-on::before { content: ""; position: absolute; left: 3px; top: 6px; width: 6px; height: 6px; background: #ffa400; }

.mt { border-left: 3px solid #a8c8e8; background: #fff; min-width: 0; }
.mt-win { background: linear-gradient(90deg, #cdd8e6, #d6e0ec); border-top: 1px solid #445; border-right: 1px solid #667; padding-right: 8px; padding-bottom: 7px; border-bottom: 1px solid #556; border-radius: 0 6px 6px 0; }
.mt-title { height: 28px; display: flex; justify-content: space-between; background: linear-gradient(90deg, #dce6f2, #c8d4e2); }
.mt-title h2 { font: 12px/28px var(--ui); white-space: nowrap; margin-left: -4px; }
.win-btns { display: flex; height: 19px; border: 1px solid #7c8898; border-top: 0; border-radius: 0 0 5px 5px; }
.win-btns button { width: 27px; display: flex; align-items: center; justify-content: center; }
.win-btns button + button { border-left: 1px solid #8c98a8; }
.win-btns .wide { width: 47px; }
.win-btns svg { width: 14px; height: 14px; fill: #fff; stroke: #556; }
.mt-menu { height: 22px; display: flex; align-items: center; gap: 17px; padding: 0 2px 0 11px; background: #f0f0f0; border-top: 1px solid #667; color: #999; font: 11px/20px var(--ui); }
.mdi { margin-left: auto; display: flex; gap: 1px; }
.mdi button { width: 18px; height: 18px; border: 1px solid #8ca0b4; background: #dfeaf6; font: 11px/14px "DejaVu Sans", sans-serif; color: #7a90a8; }
.second { border-top: 0; }
.cut { height: 13px; align-items: flex-end; overflow: hidden; background: linear-gradient(#999, #f0f0f0 8px); line-height: 14px; }
.cut > a { height: 19px; }
.frame { fill: none; stroke: #000; }
.m-u path, .m-u rect { stroke: #2f4f3f; }
.m-u rect { fill: #f0e890; }
.m-d path, .m-d rect { stroke: #000; }
.m-d rect { fill: #666; }
.mx, .mx text { font: 9px var(--tah); }
.w text { fill: #fff; }
.dg { stroke: #778899; stroke-dasharray: 3 3; }
.e-h path, .e-h rect, .e-f path, .e-f rect { stroke: #20d820; }
.e-h rect { fill: #000; }
.e-f rect { fill: #fff; }
.tabs { height: 21px; display: flex; align-items: flex-start; background: #f0f0f0; border-top: 1px solid #000; color: #777; font: 11px/17px var(--ui); padding-left: 12px; }
.tabs a { padding: 0 12px 0 11px; border-left: 1px solid #777; white-space: nowrap; }
.tabs .on { background: #fff; color: #000; border: 1px solid #000; border-top: 0; padding: 0 10px; }
.arrows { margin-left: auto; padding-right: 8px; word-spacing: 6px; color: #888; }
.low { height: 20px; padding-left: 0; }
.low i { width: 16px; height: 18px; background: #fff; border: 1px solid #000; border-top: 0; }
.low a { border-left: 0; border-right: 1px solid #777; }
.strip { height: 19px; text-align: right; padding-right: 34px; border-bottom: 1px solid #888; font: 11px/18px var(--tah); background: linear-gradient(#ddd, #fff 5px); }
.quik { height: 19px; display: flex; align-items: center; background: #f0eeec; font: 11px/17px var(--tah); white-space: nowrap; }
.quik > * { padding-left: 5px; border-right: 1px solid #ccc; min-width: 0; }
.q1 { flex: 199 0 0; } .q2 { flex: 199 0 0; } .q3 { flex: 84 0 0; } .q4 { flex: 67 0 0; } .q5 { flex: 129 0 0; display: flex; gap: 5px; } .q6 { flex: 59 0 0; }
.q5 svg { width: 53px; height: 13px; }

.info { position: absolute; left: 0; top: 450px; width: 299px; height: 147px; padding: 4px 5px 4px 2px; background: #fff; border: solid #5a9ad0; border-width: 1px 2px 1px 0; }
.info-in { height: 138px; border: 3px solid #111; outline: 1px solid #888; outline-offset: -4px; padding: 6px 1px 0 3px; font: 11px/15px var(--tah); background: linear-gradient(105deg, #f2e888 0 35%, #e0d684 60%, #ddd284); }
.when { display: block; text-align: center; width: 246px; }
.who { display: flex; justify-content: flex-end; gap: 13px; padding: 4px 59px 0 0; }
.who a { text-decoration: underline; }
.res { display: flex; align-items: center; gap: 18px; padding-left: 85px; margin-top: 6px; font-size: 15px; line-height: 18px; }
.res b { font-weight: 400; }
.info table { border-collapse: collapse; width: 100%; table-layout: fixed; font-size: 10px; }
.info th { text-align: left; font-weight: 400; padding: 0; width: 90px; white-space: nowrap; }
.info th:first-child { width: 85px; }
.info td { padding: 0; width: 55px; white-space: nowrap; }
.info td.dash { padding-left: 12px; }

.drive { position: absolute; left: 746px; top: 933px; width: 440px; height: 124px; border: 1px solid #223; border-radius: 6px; padding: 0 6px; background: linear-gradient(#dfeaf6, #b4cae4 25px, #bcd2ea); box-shadow: 0 0 10px 3px rgba(0, 0, 0, .6); z-index: 2; }
.orb { position: absolute; left: -6px; top: -6px; width: 30px; height: 30px; border-radius: 50%; border: 1px solid #34488c; background: radial-gradient(circle at 40% 25%, #a8bcf0, #4c68c8 80%); }
.drive header { display: flex; justify-content: space-between; height: 29px; padding-left: 22px; }
.drive h2 { font: 12px/28px var(--ui); white-space: nowrap; }
.aero { background: linear-gradient(#d8e4f0, #a8bcd4); }
.aero .red { background: linear-gradient(#e0a090, #c03828 50%, #d86850); border-radius: 0 0 5px 0; }
.dim { opacity: .5; }
.drive-in { background: #fff; border: 1px solid #667; padding: 1px 1px 3px; }
.lcds { display: grid; grid-template-columns: 115fr 153fr 155fr; }
.lcd { height: 60px; border: 4px solid #1a1a1a; outline: 1px solid #777; outline-offset: -5px; background: linear-gradient(110deg, #efe68c 0 65%, #ddd488 66% 88%, #e6dc88 89%); font: 38px/52px "Liberation Sans", sans-serif; text-align: right; padding-right: 9px; color: #000; }
.list { padding: 1px 3px; list-style: none; text-align: left; font: 11px/16px var(--tah); }
.list li { height: 17px; padding-left: 3px; background: #0f0; color: #063c06; border-bottom: 1px solid #030; white-space: pre; overflow: hidden; }
.pill { height: 19px; margin: 3px 5px 0; border-radius: 10px; background: linear-gradient(#222, #555); color: #fff; display: flex; gap: 27px; padding-left: 26px; font: bold 11px/18px var(--tah); }

.taskbar { position: relative; height: 30px; display: flex; align-items: stretch; gap: 3px; background: linear-gradient(90deg, #7c98b8, #a4c2e2 60px, #b4cfec 50%, #a8c4e2 1670px, #7e98b6 1700px); border-top: 1px solid #567; padding-left: 9px; }
.start { width: 36px; margin: -6px 12px 0 0; height: 36px; }
.app { width: 43px; display: flex; align-items: center; justify-content: center; border-radius: 3px; }
.app svg { width: 16px; height: 16px; }
.open { border: 1px solid #5a7898; background: linear-gradient(#dbe8f6, #b0c8e2); }
.current { background: #e2eefa; width: 36px; }
.stack { width: 7px; margin-left: -2px; border: solid #7a98b8; border-width: 0 1px; }
.tray { margin-left: auto; display: flex; align-items: center; color: #fff; font: 12px/16px var(--ui); gap: 16px; }
.tray svg { width: 64px; height: 16px; margin-left: -4px; }
.tray time { margin-left: 18px; }
.peek { width: 14px; height: 29px; margin-left: 4px; border: 1px solid #56708c; background: linear-gradient(#9ab0c8, #7890ac); }
</style>
